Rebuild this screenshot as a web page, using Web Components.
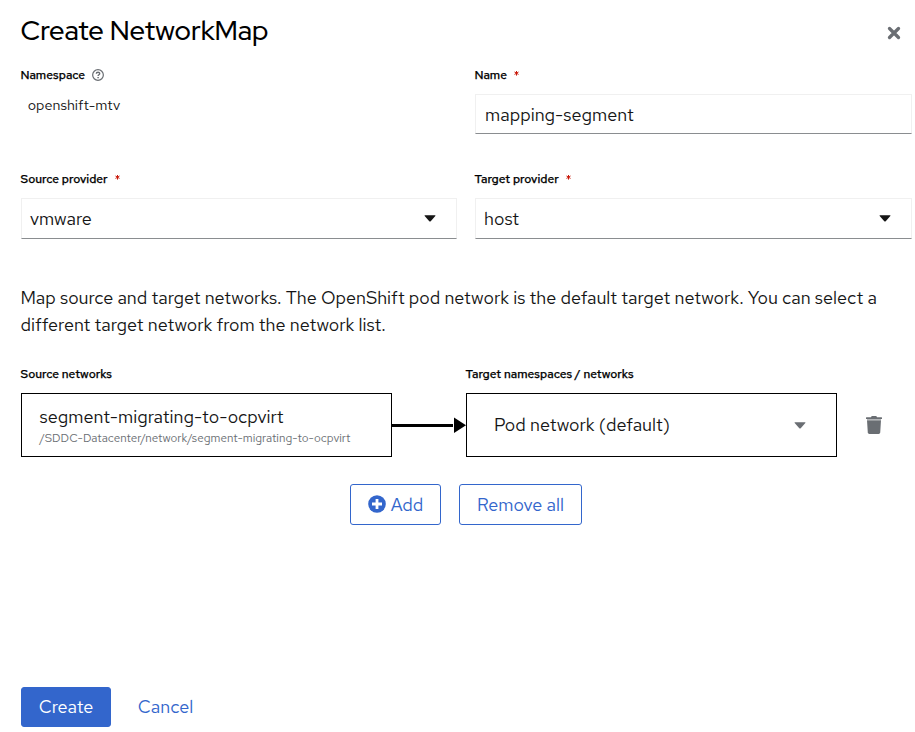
<!DOCTYPE html>
<html lang="en"><head><meta charset="utf-8"><title>Create NetworkMap</title>
<style>html,body{margin:0;background:#fff}body{font-family:"Red Hat Text",Inter,"Noto Sans",sans-serif;color:#151515}</style></head>
<body>
<network-map-page></network-map-page>
<script>
const define = (name, html) => customElements.define(name, class extends HTMLElement {
  connectedCallback() {
    if (this.shadowRoot) return;
    const t = document.createElement('template');
    t.innerHTML = html;
    this.attachShadow({ mode: 'open' }).append(t.content.cloneNode(true));
  }
});

define('form-label', `<style>
:host{display:flex;height:18px;align-items:center;margin-left:-.5px;font-size:12px;font-weight:500;-webkit-text-stroke:.25px #000;line-height:18px;white-space:nowrap;color:#000}
::slotted([slot=mark]){margin-left:7.3px}
</style><slot></slot><slot name="mark"></slot>`);

define('required-mark', `<style>:host{display:block;width:5px;height:18px}svg{display:block}</style>
<svg width="5" height="18" viewBox="0 0 5 18"><path d="M2.5 5v4.6M.5 6l4 2.4M4.5 6L.5 8.4" stroke="#c9190b" stroke-width="1"/></svg>`);

define('help-icon', `<style>:host{display:block;width:12px;height:12px}svg{display:block}</style>
<svg width="12" height="12" viewBox="0 0 12 12" fill="none" stroke="#6a6e73"><circle cx="6" cy="6" r="5.35" stroke-width="1.2"/><path d="M4.3 4.8C4.3 2.7 7.8 2.8 7.7 4.7C7.7 5.8 6.1 5.7 6.1 7" stroke-width="1.4"/><path d="M6.1 7.9v1.4" stroke-width="1.5"/></svg>`);

define('caret-icon', `<style>:host{display:block;width:12px;height:7px}svg{display:block}</style>
<svg width="12" height="7" viewBox="0 0 12 7"><path d="M1 .3h10q.8 0 .3.7L6.7 6.2q-.7.7-1.4 0L.7 1Q.2.3 1 .3z" fill="currentColor"/></svg>`);

define('text-field', `<style>
:host{box-sizing:border-box;display:flex;align-items:center;height:40px;padding:1px 10px 0 9px;border:1px solid #f0f0f0;border-bottom-color:#8a8d90;font-size:18px}
</style><slot></slot>`);

define('select-field', `<style>
:host{box-sizing:border-box;display:flex;align-items:center;justify-content:space-between;height:41px;padding:0 20px 0 8px;border:1px solid #f0f0f0;border-bottom-color:#8a8d90;font-size:18px}
span{line-height:26px;padding-top:1px}
</style><span><slot></slot></span><caret-icon></caret-icon>`);

define('form-group', `<style>:host{display:flex;flex-direction:column;gap:10px;min-width:0}</style><slot name="label"></slot><slot></slot>`);

define('action-button', `<style>
:host{box-sizing:border-box;display:flex;align-items:center;justify-content:center;gap:5px;height:41px;border:1px solid #36c;border-radius:3px;color:#36c;font-size:18px;line-height:24px;white-space:nowrap}
:host([kind=primary]){height:40px;background:#36c;color:#fff;padding-bottom:1px}
:host([kind=link]){height:40px;border-color:transparent;padding-bottom:1px}
</style><slot></slot>`);

define('plus-icon', `<style>:host{display:block;width:18px;height:18px;margin-bottom:1px}svg{display:block}</style>
<svg width="18" height="18" viewBox="0 0 18 18"><circle cx="9" cy="9" r="8.8" fill="#36c"/><path d="M9 4v10M4 9h10" stroke="#fff" stroke-width="2.8"/></svg>`);

define('source-card', `<style>
:host{box-sizing:border-box;display:flex;flex-direction:column;width:371px;height:64px;border:1px solid #000;padding:11px 17.5px 0}
.n{font-size:18px;line-height:24px}
.p{font-size:11.7px;line-height:18px;color:#6a6e73;white-space:nowrap}
</style><div class="n"><slot></slot></div><div class="p"><slot name="path"></slot></div>`);

define('target-card', `<style>
:host{box-sizing:border-box;display:flex;align-items:center;justify-content:space-between;width:371px;height:64px;border:1px solid #000;padding:0 30px 0 27px;font-size:18px;line-height:26px}
span{padding-bottom:1px}
caret-icon{color:#6a6e73}
</style><span><slot></slot></span><caret-icon></caret-icon>`);

define('flow-arrow', `<style>:host{display:block;width:74px;height:64px}svg{display:block}</style>
<svg width="74" height="64" viewBox="0 0 74 64"><path d="M0 32.5h61" stroke="#000" stroke-width="3"/><path d="M62 24.5v15.5L74 32.2z"/></svg>`);

define('trash-icon', `<style>:host{display:block;width:16px;height:18px}svg{display:block}</style>
<svg width="16" height="18" viewBox="0 0 16 18" fill="#6a6e73"><path d="M.5 1.2H5L5.7 0h4.6l.7 1.2h4.5q.5 0 .5.5V3H0V1.7q0-.5.5-.5z"/><path d="M1 4.6h14l-.8 12q-.1 1.4-1.5 1.4H3.3q-1.4 0-1.5-1.4z"/><path d="M1 3h14v1.8H1z" opacity=".5"/></svg>`);

define('close-icon', `<style>:host{display:block;width:14px;height:14px}svg{display:block}</style>
<svg width="14" height="14" viewBox="0 0 14 14"><path d="M2.5 2.5l9 9M11.5 2.5l-9 9" stroke="#6a6e73" stroke-width="3.3" stroke-linecap="round"/></svg>`);

define('network-map-page', `<style>
:host{box-sizing:border-box;display:flex;flex-direction:column;width:915px;height:732px;padding:0 3px 5px 21px;overflow:hidden}
header{display:flex;justify-content:space-between;align-items:center;height:66px;padding-right:11px}
h1{margin:-6px 0 0 -.5px;font-family:"Red Hat Display","Red Hat Text",Inter,sans-serif;font-size:27.35px;line-height:36px;font-weight:500;color:#000}
.grid{display:grid;grid-template-columns:436px 437px;column-gap:18px;row-gap:36px}
.value{font-size:14.4px;line-height:20px;margin:-9px 0 0 6.7px;padding-top:10px}
p{margin:45px 0 0 -.5px;font-size:18px;line-height:27px;letter-spacing:-.008px}
.map{display:grid;grid-template-columns:371px 74px 371px 74px;row-gap:10px;margin-top:27px;align-items:center}
.map trash-icon{justify-self:center}
.t{grid-column:3 / 5}
.actions{display:flex;gap:18px;margin:27px 0 0 329px}
footer{display:flex;gap:9px;margin-top:auto}
</style>
<header><h1>Create NetworkMap</h1><close-icon></close-icon></header>
<div class="grid">
<form-group><form-label slot="label">Namespace<help-icon slot="mark"></help-icon></form-label><div class="value">openshift-mtv</div></form-group>
<form-group><form-label slot="label">Name<required-mark slot="mark"></required-mark></form-label><text-field>mapping-segment</text-field></form-group>
<form-group><form-label slot="label">Source provider<required-mark slot="mark"></required-mark></form-label><select-field>vmware</select-field></form-group>
<form-group><form-label slot="label">Target provider<required-mark slot="mark"></required-mark></form-label><select-field>host</select-field></form-group>
</div>
<p>Map source and target networks. The OpenShift pod network is the default target network. You can select a different target network from the network list.</p>
<div class="map">
<form-label>Source networks</form-label><form-label class="t">Target namespaces / networks</form-label>
<source-card>segment-migrating-to-ocpvirt<span slot="path">/SDDC-Datacenter/network/segment-migrating-to-ocpvirt</span></source-card>
<flow-arrow></flow-arrow>
<target-card>Pod network (default)</target-card>
<trash-icon></trash-icon>
</div>
<div class="actions"><action-button style="width:91px"><plus-icon></plus-icon>Add</action-button><action-button style="width:123px">Remove all</action-button></div>
<footer><action-button kind="primary" style="width:90px">Create</action-button><action-button kind="link" style="width:91px">Cancel</action-button></footer>`);
</script>
</body></html>
